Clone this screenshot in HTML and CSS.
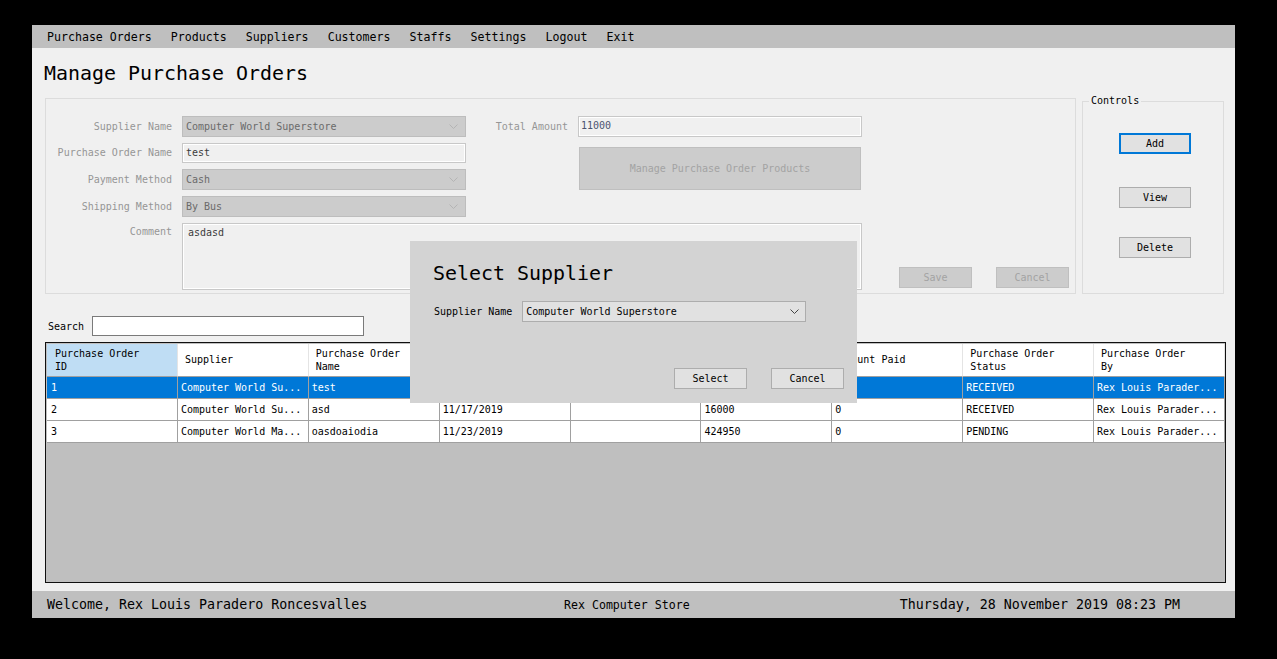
FILE: index.html
```html
<!DOCTYPE html>
<html>
<head>
<meta charset="utf-8">
<title>Manage Purchase Orders</title>
<link rel="stylesheet" href="styles.css">
</head>
<body>
<div class="window">
  <nav class="menubar">
    <span>Purchase Orders</span><span>Products</span><span>Suppliers</span><span>Customers</span><span>Staffs</span><span>Settings</span><span>Logout</span><span>Exit</span>
  </nav>
  <main class="main">
    <h1 class="title">Manage Purchase Orders</h1>
    <div class="top">
      <section class="formbox">
        <div class="fields">
          <label class="lbl">Supplier Name</label>
          <div class="combo dis"><span>Computer World Superstore</span><svg class="chev" width="9" height="5" viewBox="0 0 9 5"><polyline points="0.5,0.5 4.5,4.5 8.5,0.5" fill="none" stroke="currentColor" stroke-width="1"/></svg></div>
          <label class="lbl lbl2">Total Amount</label>
          <div class="text ro">11000</div>
          <label class="lbl">Purchase Order Name</label>
          <div class="text">test</div>
          <button class="mpop">Manage Purchase Order Products</button>
          <label class="lbl">Payment Method</label>
          <div class="combo dis"><span>Cash</span><svg class="chev" width="9" height="5" viewBox="0 0 9 5"><polyline points="0.5,0.5 4.5,4.5 8.5,0.5" fill="none" stroke="currentColor" stroke-width="1"/></svg></div>
          <label class="lbl">Shipping Method</label>
          <div class="combo dis"><span>By Bus</span><svg class="chev" width="9" height="5" viewBox="0 0 9 5"><polyline points="0.5,0.5 4.5,4.5 8.5,0.5" fill="none" stroke="currentColor" stroke-width="1"/></svg></div>
          <label class="lbl lbl-top">Comment</label>
          <div class="textarea">asdasd</div>
        </div>
        <div class="actions">
          <button class="btn disbtn">Save</button>
          <button class="btn disbtn">Cancel</button>
        </div>
      </section>
      <fieldset class="controls">
        <legend>Controls</legend>
        <div class="ctl-col">
          <button class="btn btn-add">Add</button>
          <button class="btn btn-view">View</button>
          <button class="btn btn-del">Delete</button>
        </div>
      </fieldset>
    </div>
    <div class="search">
      <label>Search</label>
      <div class="search-input"></div>
    </div>
    <div class="grid">
      <table>
        <thead>
          <tr>
            <th class="sel">Purchase Order<br>ID</th>
            <th>Supplier</th>
            <th>Purchase Order<br>Name</th>
            <th>Purchase Order<br>Date</th>
            <th>Date Received</th>
            <th>Total Amount</th>
            <th>Amount Paid</th>
            <th>Purchase Order<br>Status</th>
            <th>Purchase Order<br>By</th>
          </tr>
        </thead>
        <tbody>
          <tr class="active">
            <td>1</td><td>Computer World Su...</td><td>test</td><td>11/16/2019</td><td></td><td>11000</td><td>0</td><td>RECEIVED</td><td>Rex Louis Parader...</td>
          </tr>
          <tr>
            <td>2</td><td>Computer World Su...</td><td>asd</td><td>11/17/2019</td><td></td><td>16000</td><td>0</td><td>RECEIVED</td><td>Rex Louis Parader...</td>
          </tr>
          <tr>
            <td>3</td><td>Computer World Ma...</td><td>oasdoaiodia</td><td>11/23/2019</td><td></td><td>424950</td><td>0</td><td>PENDING</td><td>Rex Louis Parader...</td>
          </tr>
        </tbody>
      </table>
    </div>

    <div class="dialog">
      <h2 class="dlg-title">Select Supplier</h2>
      <div class="dlg-row">
        <label>Supplier Name</label>
        <div class="combo dlg-combo"><span>Computer World Superstore</span><svg class="chev" width="9" height="5" viewBox="0 0 9 5"><polyline points="0.5,0.5 4.5,4.5 8.5,0.5" fill="none" stroke="currentColor" stroke-width="1"/></svg></div>
      </div>
      <div class="dlg-actions">
        <button class="btn">Select</button>
        <button class="btn">Cancel</button>
      </div>
    </div>
  </main>
  <footer class="status">
    <span class="welcome">Welcome, Rex Louis Paradero Roncesvalles</span>
    <span class="store">Rex Computer Store</span>
    <span class="datetime">Thursday, 28 November 2019 08:23 PM</span>
  </footer>
</div>
</body>
</html>
```

FILE: styles.css
```css
* { box-sizing: border-box; }

html, body {
  margin: 0;
  padding: 0;
}

body {
  background: #000;
  width: 1277px;
  height: 659px;
  overflow: hidden;
  font-family: "DejaVu Sans Mono", "Liberation Mono", monospace;
  color: #000;
}

.window {
  margin: 25px 0 0 32px;
  width: 1203px;
  height: 593px;
  display: flex;
  flex-direction: column;
  background: #f0f0f0;
}

/* menu */
.menubar {
  height: 23px;
  flex: none;
  background: #bfbfbf;
  display: flex;
  align-items: center;
  gap: 19.1px;
  padding-left: 15px;
  font-size: 11.6px;
  line-height: 14px;
}

/* main */
.main {
  flex: 1;
  position: relative;
  padding: 13px 0 0 13px;
  display: flex;
  flex-direction: column;
}

.title {
  margin: 0 0 0 -1px;
  font-size: 19.95px;
  font-weight: normal;
  line-height: 24px;
}

.top {
  display: flex;
  gap: 6px;
  margin-top: 13px;
  align-items: flex-start;
}

.formbox {
  width: 1031px;
  height: 196px;
  border: 1px solid #dcdcdc;
  display: flex;
}

.fields {
  display: grid;
  grid-template-columns: 126px 284px 92px 284px;
  grid-template-rows: 21px 20px 21px 21px 67px;
  column-gap: 10px;
  row-gap: 6px;
  padding-top: 17px;
  font-size: 10px;
}

.lbl {
  grid-column: 1;
  align-self: center;
  text-align: right;
  color: #969696;
  line-height: 12px;
  white-space: nowrap;
}

.lbl2 { grid-column: 3; }

.lbl-top {
  align-self: start;
  padding-top: 3px;
}

.combo {
  display: flex;
  align-items: center;
  justify-content: space-between;
  padding: 0 7px 0 3px;
  line-height: 12px;
  white-space: nowrap;
}

.combo.dis {
  background: #cccccc;
  border: 1px solid #bdbdbd;
  color: #6a6a6a;
}

.combo.dis .chev { color: #b4b4b4; }

.text {
  background: #f0f0f0;
  border: 1px solid #c8c8c8;
  box-shadow: inset 0 0 0 1px #ffffff;
  padding: 0 3px;
  line-height: 18px;
  color: #3c3c3c;
}

.text.ro {
  grid-column: 4;
  color: #4a5470;
  padding-left: 2px;
}

.mpop {
  grid-column: 4;
  grid-row: 2 / span 2;
  margin: 4px 1px 0 1px;
  background: #cccccc;
  border: 1px solid #bfbfbf;
  color: #a3a3a3;
  font-family: inherit;
  font-size: 10px;
  padding: 0;
}

.textarea {
  grid-column: 2 / 5;
  background: #f0f0f0;
  border: 1px solid #c8c8c8;
  box-shadow: inset 0 0 0 1px #ffffff;
  padding: 3px 5px;
  line-height: 12px;
  color: #3c3c3c;
}

.actions {
  margin-left: auto;
  align-self: flex-end;
  display: flex;
  gap: 24px;
  padding: 0 6px 5px 0;
}

.btn {
  width: 73px;
  height: 21px;
  background: #e1e1e1;
  border: 1px solid #adadad;
  font-family: inherit;
  font-size: 10px;
  color: #000;
  padding: 0;
}

.btn.disbtn {
  background: #cccccc;
  border-color: #bfbfbf;
  color: #a3a3a3;
}

/* controls */
.controls {
  margin: -3px 0 0 0;
  padding: 0;
  width: 142px;
  height: 199px;
  border: 1px solid #dcdcdc;
  min-width: 0;
}

.controls legend {
  margin-left: 6px;
  padding: 0 2px;
  font-size: 10px;
  line-height: 12px;
}

.ctl-col {
  display: flex;
  flex-direction: column;
  align-items: flex-start;
  padding: 26px 0 0 36px;
}

.btn-add {
  width: 72px;
  border: 2px solid #0078d7;
}

.btn-view {
  width: 72px;
  margin-top: 33px;
}

.btn-del {
  width: 72px;
  margin-top: 29px;
}

/* search */
.search {
  display: flex;
  align-items: center;
  gap: 8px;
  margin-top: 22px;
  padding-left: 3px;
  font-size: 10px;
}

.search-input {
  width: 272px;
  height: 20px;
  background: #fff;
  border: 1px solid #7a7a7a;
}

/* grid */
.grid {
  margin-top: 6px;
  width: 1181px;
  height: 241px;
  border: 1px solid #101010;
  background: #bfbfbf;
  padding: 1px 0 0 1px;
}

.grid table {
  border-collapse: separate;
  border-spacing: 0;
  table-layout: fixed;
  width: 1178px;
  font-size: 10px;
}

.grid th {
  height: 33px;
  background: #fff;
  font-weight: normal;
  text-align: left;
  padding: 0 4px 1px 7px;
  line-height: 13px;
  border-right: 1px solid #e4e4e4;
  border-bottom: 1px solid #a0a0a0;
  vertical-align: middle;
}

.grid th.sel {
  background: #bfddf4;
  padding-left: 8px;
}

.grid td {
  height: 22px;
  background: #fff;
  padding: 0 3px 0 3px;
  line-height: 21px;
  border-right: 1px solid #a0a0a0;
  border-bottom: 1px solid #a0a0a0;
  white-space: nowrap;
  overflow: hidden;
}

.grid td:first-child { padding-left: 4px; }

.grid tr.active td {
  background: #0078d7;
  color: #fff;
}

/* dialog */
.dialog {
  position: absolute;
  left: 378px;
  top: 193px;
  width: 447px;
  height: 162px;
  background: #d3d3d3;
  padding: 20px 13px 14px 23px;
  display: flex;
  flex-direction: column;
}

.dlg-title {
  margin: 0;
  font-size: 19.95px;
  font-weight: normal;
  line-height: 24px;
}

.dlg-row {
  display: flex;
  align-items: center;
  gap: 10px;
  margin-top: 16px;
  padding-left: 1px;
  font-size: 10px;
}

.dlg-combo {
  width: 284px;
  height: 21px;
  background: #e1e1e1;
  border: 1px solid #adadad;
  color: #000;
  padding: 0 6px 0 3px;
}

.dlg-combo .chev { color: #444; }

.dlg-actions {
  margin-top: auto;
  display: flex;
  justify-content: flex-end;
  gap: 24px;
}

/* status */
.status {
  height: 27px;
  flex: none;
  background: #bfbfbf;
  display: flex;
  align-items: center;
  padding: 0 55px 0 15px;
}

.welcome {
  width: 517px;
  font-size: 13.3px;
}

.store {
  font-size: 11.6px;
}

.datetime {
  margin-left: auto;
  font-size: 13.3px;
}
```
